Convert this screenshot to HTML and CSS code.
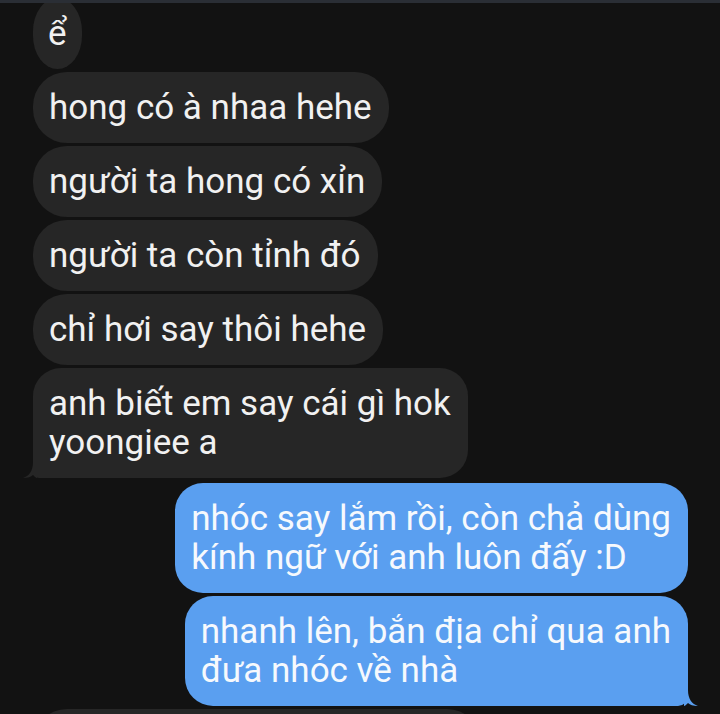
FILE: index.html
```html
<!DOCTYPE html>
<html lang="vi">
<head>
    <meta charset="UTF-8">
    <meta name="viewport" content="width=device-width, initial-scale=1.0">
    <title>Tin nhắn</title>
    <link rel="stylesheet" href="styles.css">
</head>
<body>
    <div class="topbar"></div>

    <div class="thread">
        <div class="msg in narrow">ể</div>
        <div class="msg in">hong có à nhaa hehe</div>
        <div class="msg in">người ta hong có xỉn</div>
        <div class="msg in">người ta còn tỉnh đó</div>
        <div class="msg in">chỉ hơi say thôi hehe</div>
        <div class="msg in last">
            anh biết em say cái gì hok<br>yoongiee a
            <svg class="tail tail-left" viewBox="0 0 14 16"><path d="M0 0H4C4 9 8 14 14 16C9 16 6 15 4 13C2 15 1 16 0 16Z"/></svg>
        </div>

        <div class="msg out first">nhóc say lắm rồi, còn chả dùng<br>kính ngữ với anh luôn đấy :D</div>
        <div class="msg out last">
            nhanh lên, bắn địa chỉ qua anh<br>đưa nhóc về nhà
            <svg class="tail tail-right" viewBox="0 0 14 16"><path d="M0 0H4C4 9 8 14 14 16C9 16 6 15 4 13C2 15 1 16 0 16Z"/></svg>
        </div>

        <!-- next message, only its top edge is visible -->
        <div class="msg in stub"></div>
    </div>
</body>
</html>
```

FILE: styles.css
```css
body {
    margin: 0;
    background-color: #121212;
    font-family: Roboto, "Noto Sans", sans-serif;
    overflow: hidden;
}
.topbar {
    position: fixed;
    top: 0;
    left: 0;
    right: 0;
    height: 3px;
    background-color: #2a2e35;
    z-index: 2;
}
.thread {
    display: flex;
    flex-direction: column;
    gap: 3px;
    margin-top: -2px;
    padding: 0 32px 0 33px;
}
.msg {
    position: relative;
    width: fit-content;
    padding: 16px 17px 16px 16px;
    font-size: 35px;
    line-height: 39px;
    border-radius: 34px;
    white-space: nowrap;
}
.msg.narrow {
    padding: 16px 15px;
    border-radius: 25px / 34px;
}
.msg.in {
    align-self: flex-start;
    background-color: #262626;
    color: #f1f1f1;
}
.msg.in.last {
    border-radius: 28px 28px 28px 6px;
}
.msg.out {
    align-self: flex-end;
    background-color: #5a9ff0;
    color: #f6f9fd;
    border-radius: 28px;
}
.msg.out.first {
    margin-top: 2px;
}
.msg.out.last {
    border-bottom-right-radius: 10px;
}
.msg.stub {
    width: 416px;
    height: 39px;
    padding: 16px;
}
.tail {
    position: absolute;
    bottom: 0;
    width: 14px;
    height: 16px;
}
.tail-right {
    right: -10px;
    fill: #5a9ff0;
}
.tail-left {
    left: -10px;
    fill: #262626;
    transform: scaleX(-1);
}
```
